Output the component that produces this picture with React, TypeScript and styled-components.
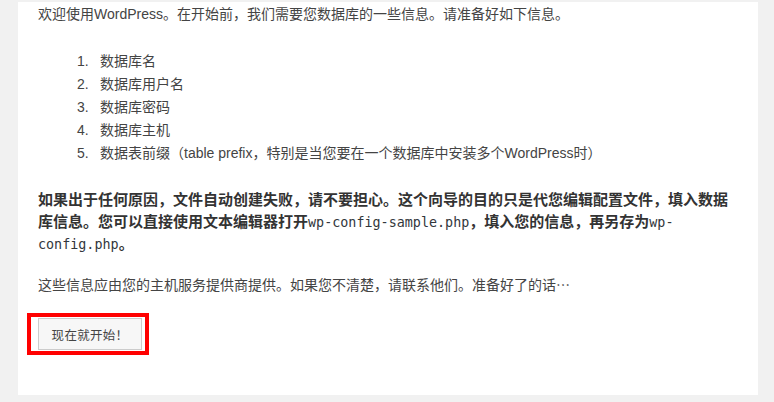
import React from "react";
import styled, { createGlobalStyle } from "styled-components";

const Global = createGlobalStyle`
  html, body { margin: 0; padding: 0; background: #f1f1f1; }
  body {
    font-family: "Liberation Sans", "Noto Sans CJK SC", sans-serif;
    color: #444;
  }
`;

const Page = styled.div`
  padding: 2px 0 8px 18px;
`;

const Panel = styled.div`
  width: 740px;
  box-sizing: border-box;
  background: #fff;
  padding: 1px 20px 40px 20px;
`;

const Para = styled.p<{ $mt?: number }>`
  margin: ${(p) => p.$mt ?? 0}px 0 0 0;
  font-size: 14px;
  line-height: 22px;
  color: #444;
`;

const Cjk = styled.span`
  font-family: "Noto Sans CJK SC", sans-serif;
  line-height: 1;
`;

const BoldPara = styled.p`
  margin: 24px 0 0 0;
  font-size: 15px;
  line-height: 22px;
  font-weight: 700;
  color: #333;
`;

const Code = styled.code`
  font-family: "DejaVu Sans Mono", "Liberation Mono", monospace;
  font-size: 13.4px;
  line-height: 1;
  font-weight: 400;
  color: #32373c;
`;

const List = styled.ol`
  list-style: none;
  margin: 25px 0 0 0;
  padding: 0 0 0 39px;
`;

const Item = styled.li`
  display: flex;
  font-size: 14px;
  line-height: 23px;
  color: #444;
`;

const Num = styled.span`
  width: 23px;
  flex: none;
`;

const Highlight = styled.div`
  display: inline-flex;
  align-items: flex-start;
  margin: 17px 0 0 -11px;
  border: 4px solid #ff0000;
  padding: 1px 3px 0 7px;
  height: 33px;
  box-sizing: content-box;
`;

const Button = styled.button`
  width: 104px;
  height: 32px;
  box-sizing: border-box;
  background: #f7f7f7;
  border: 1px solid #cccccc;
  border-radius: 0;
  color: #444;
  font-family: "Noto Sans CJK SC", sans-serif;
  font-size: 12.5px;
  letter-spacing: 0.3px;
  padding: 0;
  cursor: pointer;
`;

const items = [
  "数据库名",
  "数据库用户名",
  "数据库密码",
  "数据库主机",
  "数据表前缀（table prefix，特别是当您要在一个数据库中安装多个WordPress时）",
];

export default function App() {
  return (
    <>
      <Global />
      <Page>
        <Panel>
          <Para>欢迎使用WordPress。在开始前，我们需要您数据库的一些信息。请准备好如下信息。</Para>
          <List>
            {items.map((t, i) => (
              <Item key={i}>
                <Num>{i + 1}.</Num>
                <span>{t}</span>
              </Item>
            ))}
          </List>
          <BoldPara>
            如果出于任何原因，文件自动创建失败，请不要担心。这个向导的目的只是代您编辑配置文件，填入数据库信息。您可以直接使用文本编辑器打开
            <Code>wp-config-sample.php</Code>，填入您的信息，再另存为<Code>wp-config.php</Code>。
          </BoldPara>
          <Para $mt={19}>
            这些信息应由您的主机服务提供商提供。如果您不清楚，请联系他们。准备好了的话<Cjk>…</Cjk>
          </Para>
          <Highlight>
            <Button>现在就开始！</Button>
          </Highlight>
        </Panel>
      </Page>
    </>
  );
}
